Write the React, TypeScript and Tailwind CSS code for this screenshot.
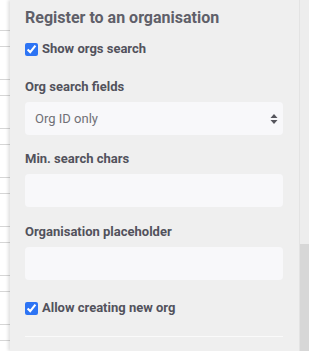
const rows = [0, 1, 2, 3, 4, 5, 6];

function Field({ label, children }: { label: string; children: React.ReactNode }) {
  return (
    <div className="flex flex-col">
      <span className="text-[13px] font-bold leading-[20px] text-[#52525c]">{label}</span>
      <div className="mt-[5px]">{children}</div>
    </div>
  );
}

function Check({ label }: { label: string }) {
  return (
    <label className="flex items-center gap-[4px]">
      <input
        type="checkbox"
        defaultChecked
        className="m-0 h-[13px] w-[13px] accent-[#2d74f4]"
      />
      <span className="text-[13px] font-bold leading-[20px] text-[#52525c]">{label}</span>
    </label>
  );
}

export default function App() {
  return (
    <div
      className="flex h-[351px] w-[309px] overflow-hidden bg-white"
      style={{ fontFamily: "Roboto, 'Liberation Sans', sans-serif" }}
    >
      {/* table behind the drawer */}
      <div className="w-[10px] shrink-0 bg-white pt-[30px]">
        {rows.map((r) => (
          <div key={r} className="h-[49px] border-t border-[#d6d6d6]">
            <div className="h-[16px] border-b border-[#d6d6d6]" />
          </div>
        ))}
      </div>

      {/* drawer */}
      <div className="relative flex-1 bg-[#efefef] pl-[15px] pr-[16px] pt-[8px] shadow-[-2px_0_3px_rgba(0,0,0,0.12)]">
        <h2 className="text-[16px] font-bold leading-[20px] text-[#5f5f69]">
          Register to an organisation
        </h2>

        <div className="mt-[11px]">
          <Check label="Show orgs search" />
        </div>

        <div className="mt-[18px]">
          <Field label="Org search fields">
            <div className="flex h-[33px] items-center justify-between rounded-[4px] bg-[#f8f8fa] pl-[10px] pr-[5px]">
              <span className="text-[13px] text-[#707076]">Org ID only</span>
              <svg width="8" height="12" viewBox="0 0 8 12" className="text-[#55555c]">
                <path d="M4 1 L7.5 5 H0.5 Z" fill="currentColor" />
                <path d="M4 11 L7.5 7 H0.5 Z" fill="currentColor" />
              </svg>
            </div>
          </Field>
        </div>

        <div className="mt-[14px]">
          <Field label="Min. search chars">
            <div className="h-[33px] rounded-[4px] bg-[#f8f8fa]" />
          </Field>
        </div>

        <div className="mt-[15px]">
          <Field label="Organisation placeholder">
            <div className="h-[33px] rounded-[4px] bg-[#f8f8fa]" />
          </Field>
        </div>

        <div className="mt-[18px]">
          <Check label="Allow creating new org" />
        </div>

        <div className="mt-[18px] border-t border-[#fafafa]" />
      </div>

      {/* scrollbar */}
      <div className="flex w-[10px] shrink-0 flex-col border-l border-[#e4e4e4] bg-[#ededed]">
        <div className="h-[244px]" />
        <div className="flex-1 bg-[#d7d7d7]" />
      </div>
    </div>
  );
}
